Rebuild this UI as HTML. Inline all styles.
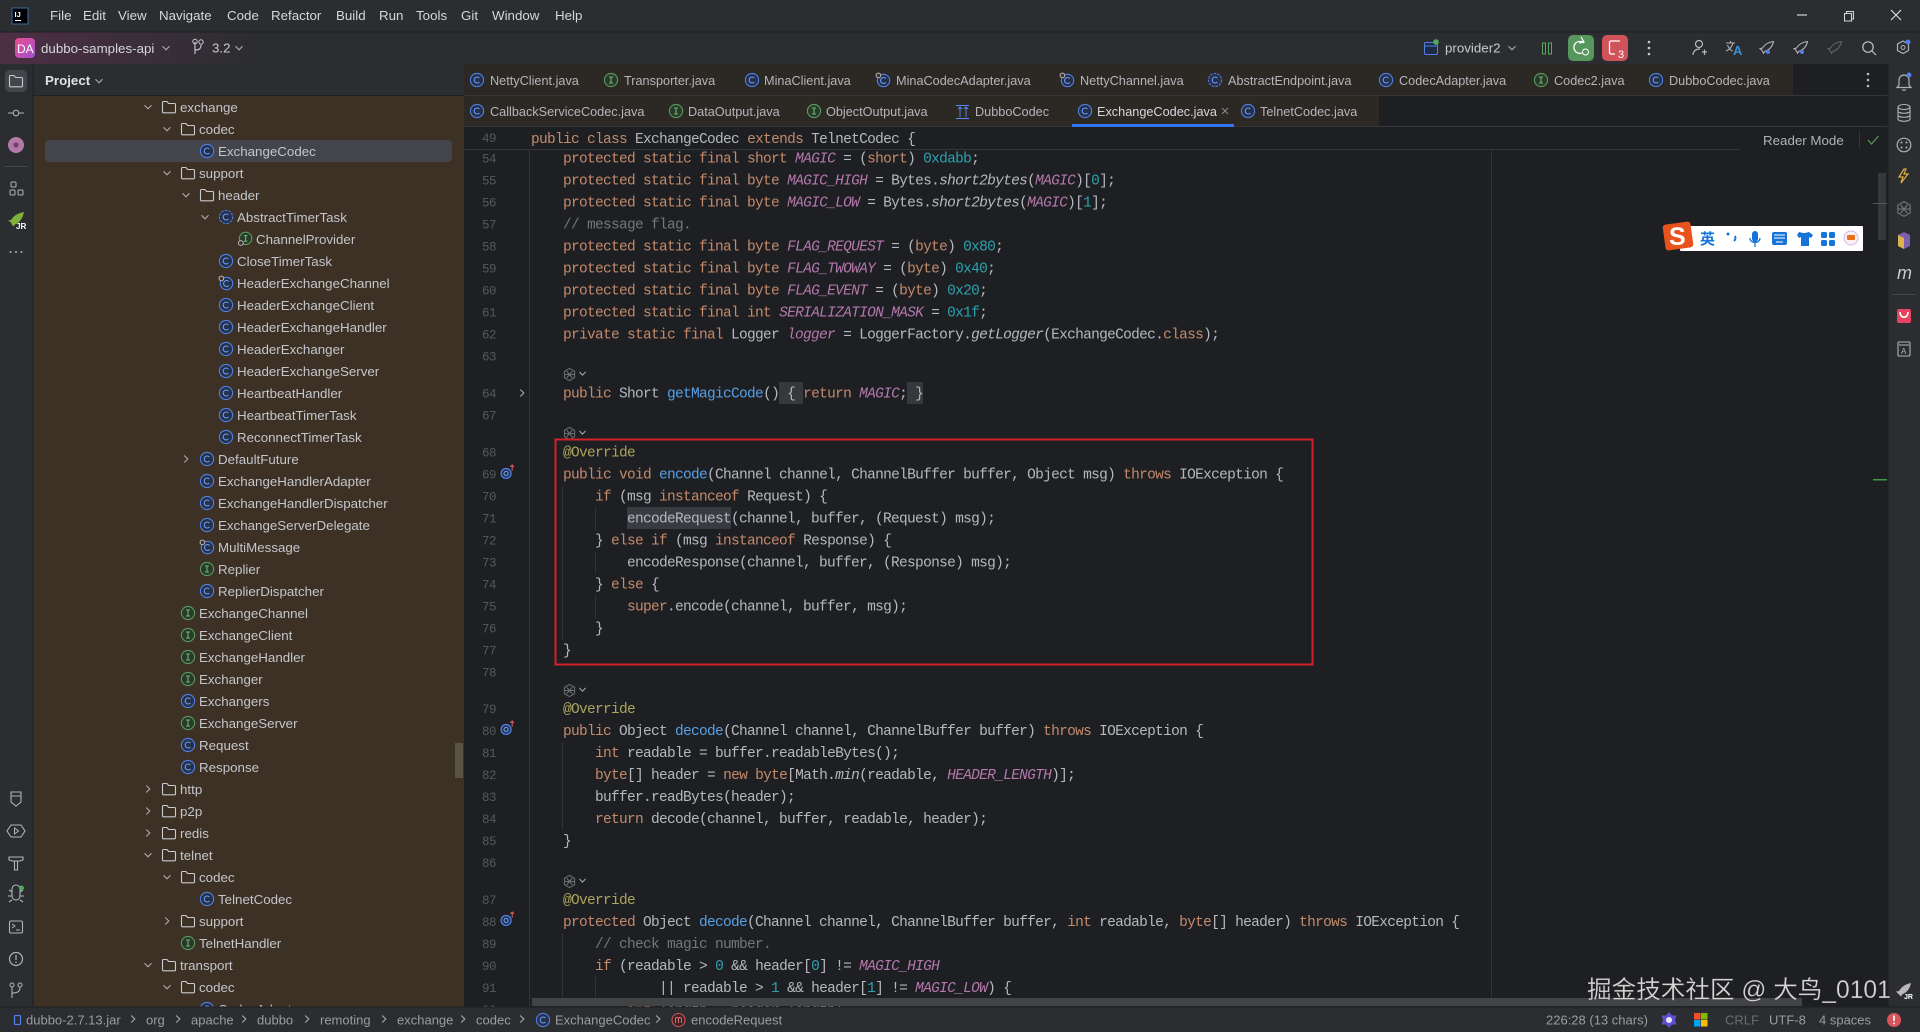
<!DOCTYPE html>
<html><head><meta charset="utf-8"><title>ExchangeCodec.java</title>
<style>
html,body{margin:0;padding:0;background:#1e1f22;width:1920px;height:1032px;overflow:hidden}
svg{display:block;filter:blur(.35px)}
text{white-space:pre;font-family:"Liberation Sans","Noto Sans CJK SC",sans-serif;font-size:13.33px;fill:#bcbec4}
.m{fill:#d5d7dc}
.t{font-size:12.7px;fill:#b4b6bc}
.tr{fill:#c4c6cc}
.c{font-family:"Liberation Mono",monospace;font-size:14.5px;letter-spacing:-.7px;fill:#b6b8be}
.l{font-family:"Liberation Mono",monospace;font-size:12.5px;letter-spacing:-.5px;fill:#55585d}
.k{fill:#c48a6c}.n{fill:#b478ad;font-style:italic}.d{fill:#2aa3ae}.f{fill:#56a0e8}.i{font-style:italic}.g{fill:#73767c}.a{fill:#aaa55c}
.s{font-size:13px;fill:#9a9ca2}
.ln{fill:none;stroke:#b0b2b8;stroke-width:1.2}
</style></head><body>
<svg width="1920" height="1032" viewBox="0 0 1920 1032" xmlns="http://www.w3.org/2000/svg">
<defs>
<linearGradient id="pg" x1="0" x2="1" y1="0" y2="0"><stop offset="0" stop-color="#4d2f45"/><stop offset="1" stop-color="#2b2d30"/></linearGradient>
<linearGradient id="da" x1="0" x2="1" y1="0" y2="1"><stop offset="0" stop-color="#ea4f8f"/><stop offset="1" stop-color="#a24fd0"/></linearGradient>
<symbol id="c" viewBox="0 0 16 16"><circle cx="8" cy="8" r="6.6" fill="#25304a" stroke="#4f80e8" stroke-width="1.1"/><path d="M10.4 6a3 3 0 1 0 0 4" fill="none" stroke="#6f9cf5" stroke-width="1.1"/></symbol>
<symbol id="ca" viewBox="0 0 16 16"><circle cx="8" cy="8" r="6.6" fill="#25304a" stroke="#4f80e8" stroke-width="1.1" stroke-dasharray="2.5 1.2"/><path d="M10.4 6a3 3 0 1 0 0 4" fill="none" stroke="#6f9cf5" stroke-width="1.1"/></symbol>
<symbol id="cp" viewBox="0 0 16 16"><circle cx="8.5" cy="8.5" r="6.2" fill="#25304a" stroke="#4f80e8" stroke-width="1.1"/><path d="M10.8 6.5a3 3 0 1 0 0 4" fill="none" stroke="#6f9cf5" stroke-width="1.1"/><circle cx="3.4" cy="3.4" r="2.3" fill="#3c3124" stroke="#b8bac0"/></symbol>
<symbol id="ii" viewBox="0 0 16 16"><circle cx="8" cy="8" r="6.6" fill="#2a3a2a" stroke="#5a9a5f" stroke-width="1.1"/><path d="M6 5h4M8 5v6M6 11h4" fill="none" stroke="#6fb374" stroke-width="1.1"/></symbol>
<symbol id="ip" viewBox="0 0 16 16"><circle cx="8.6" cy="7.4" r="6.2" fill="#2a3a2a" stroke="#5a9a5f" stroke-width="1.1"/><path d="M6.8 4.6h3.6M8.6 4.6v5.6M6.8 10.2h3.6" fill="none" stroke="#6fb374" stroke-width="1.1"/><circle cx="3.8" cy="12" r="2.4" fill="#3c3124" stroke="#b8bac0"/></symbol>
<symbol id="fo" viewBox="0 0 16 16"><path d="M1.5 3.5a1 1 0 0 1 1-1h3.4l1.7 2h5.9a1 1 0 0 1 1 1v7.3a1 1 0 0 1-1 1h-11a1 1 0 0 1-1-1z" fill="none" stroke="#c9cbd1" stroke-width="1.1"/></symbol>
<symbol id="dn" viewBox="0 0 10 10"><path d="M1.5 3.2 5 6.8 8.5 3.2" fill="none" stroke="#a8aab0" stroke-width="1.1"/></symbol>
<symbol id="rt" viewBox="0 0 10 10"><path d="M3.2 1.5 6.8 5 3.2 8.5" fill="none" stroke="#a8aab0" stroke-width="1.1"/></symbol>
<symbol id="hi" viewBox="0 0 14 16"><path d="M7 1.5 12.5 4.5v7L7 14.5 1.5 11.5v-7zM4 4.5l6 7M10 4.5l-6 7M1.5 8h11" fill="none" stroke="#6e7075" stroke-width="1.1"/></symbol>
<symbol id="ov" viewBox="0 0 16 18"><circle cx="6.5" cy="10" r="5.3" fill="#22304d" stroke="#4f86ee" stroke-width="1.3"/><circle cx="6.5" cy="10" r="2.2" fill="none" stroke="#74a3f7" stroke-width="1.1"/><path d="M13 7V1M11 3l2-2 2 2" fill="none" stroke="#e25b5b" stroke-width="1.1"/></symbol>
<symbol id="rk" viewBox="0 0 16 16"><path d="M14.5 1.5C10 2 6 4 3.5 8l-2.5.7 2 1.5 1.5 3 1.3-1.7C10 10 13.500 6.500 14.500 1.500z" fill="none" stroke="#b0b2b8" stroke-width="1.1"/></symbol>
</defs>

<!-- base chrome -->
<rect width="1920" height="1032" fill="#1e1f22"/>
<rect width="1920" height="64" fill="#2b2d30"/>
<rect y="32" width="260" height="32" fill="url(#pg)"/>
<rect y="31.5" width="1920" height="1" fill="#1f2022"/>
<rect y="64" width="33" height="943" fill="#2b2d30"/>
<rect x="33" y="64" width="431" height="32" fill="#2b2d30"/>
<rect x="33" y="96" width="431" height="911" fill="#3c3124"/>
<rect x="33" y="95" width="431" height="1" fill="#1f2022"/>
<rect x="32.5" y="64" width="1" height="943" fill="#1f2022"/>
<rect x="464" y="64" width="1329" height="32" fill="#2c2823"/>
<rect x="464" y="96" width="915" height="30" fill="#2c2823"/>
<rect x="464" y="95" width="1424" height="1" fill="#35363a"/>
<rect x="464" y="126" width="1424" height="1" fill="#35363a"/>
<rect x="1888" y="64" width="32" height="943" fill="#2b2d30"/>
<rect x="1887.5" y="64" width="1" height="943" fill="#1f2022"/>
<rect x="464" y="149" width="1276" height="1" fill="#35363a"/>
<rect x="529" y="150" width="1" height="857" fill="#313336"/>
<rect x="1491" y="150" width="1" height="857" fill="#313336"/>

<!-- title bar -->
<rect x="12" y="8" width="16" height="16" fill="#000" stroke="#2f6ea8"/>
<text x="14.5" y="17" style="font-size:7.5px;font-weight:bold;fill:#fff">IJ</text>
<rect x="15" y="20" width="6" height="1" fill="#fff"/>
<text class="m" x="50" y="20">File</text>
<text class="m" x="83" y="20">Edit</text>
<text class="m" x="118" y="20">View</text>
<text class="m" x="159" y="20">Navigate</text>
<text class="m" x="227" y="20">Code</text>
<text class="m" x="271" y="20">Refactor</text>
<text class="m" x="336" y="20">Build</text>
<text class="m" x="379" y="20">Run</text>
<text class="m" x="416" y="20">Tools</text>
<text class="m" x="461" y="20">Git</text>
<text class="m" x="492" y="20">Window</text>
<text class="m" x="555" y="20">Help</text>
<path d="M1797 15h10" stroke="#d0d2d8" stroke-width="1.2"/>
<path d="M1844.5 13.5h7v7.5h-7zM1846.5 13.5v-2h7v7.5h-2" fill="none" stroke="#d0d2d8" stroke-width="1.1"/>
<path d="M1891 10l10 10M1901 10l-10 10" stroke="#d8dade" stroke-width="1.2"/>

<!-- toolbar -->
<rect x="15" y="38" width="20" height="20" rx="4" fill="url(#da)"/>
<text x="17" y="53" style="font-size:12px;fill:#fff">DA</text>
<text x="41" y="53" style="fill:#d5d7dc">dubbo-samples-api</text>
<use href="#dn" x="161" y="43" width="10" height="10"/>
<path d="M195 42v12M195 50c4 0 6-1 6-5" fill="none" stroke="#c8cad0" stroke-width="1.1"/><circle cx="195" cy="41.5" r="2.2" fill="none" stroke="#c8cad0"/><circle cx="201" cy="42" r="2.2" fill="none" stroke="#c8cad0"/>
<text x="212" y="52.5" style="fill:#c8cad0">3.2</text>
<use href="#dn" x="234" y="43" width="10" height="10"/>
<rect x="1424.5" y="42.5" width="13" height="12" rx="1.5" fill="#1e2a46" stroke="#4f80e8"/><path d="M1425 46h12" stroke="#4f80e8"/><circle cx="1436" cy="42" r="2.8" fill="#57a85e"/>
<text x="1445" y="52.5" style="fill:#c8cad0">provider2</text>
<use href="#dn" x="1507" y="43" width="10" height="10"/>
<rect x="1542.5" y="43" width="3" height="11" fill="none" stroke="#57a85e"/><rect x="1548.5" y="43" width="3" height="11" fill="none" stroke="#57a85e"/>
<rect x="1568" y="35" width="26" height="26" rx="5" fill="#57965c"/>
<path d="M1584 43a6 6 0 1 0-2 10" fill="none" stroke="#fff" stroke-width="1.3"/><path d="M1581 37l3 5-5 1" fill="none" stroke="#fff" stroke-width="1.2"/><circle cx="1585.5" cy="52" r="3" fill="none" stroke="#fff"/>
<rect x="1602" y="35" width="26" height="26" rx="5" fill="#d0525a"/>
<path d="M1620 41h-9a1.5 1.5 0 0 0-1.5 1.5v10a1.5 1.5 0 0 0 1.5 1.5h4" fill="none" stroke="#fff" stroke-width="1.3"/>
<text x="1618" y="58" style="font-size:11px;fill:#fff">3</text>
<circle cx="1649" cy="42" r="1.3" fill="#c8cad0"/><circle cx="1649" cy="48" r="1.3" fill="#c8cad0"/><circle cx="1649" cy="54" r="1.3" fill="#c8cad0"/>
<circle cx="1699" cy="44" r="3.5" fill="none" stroke="#b8bac0" stroke-width="1.2"/><path d="M1693 55c0-4 3-6 7-6M1702 52h5M1704.5 49.5v5.5" fill="none" stroke="#b8bac0" stroke-width="1.2"/>
<path d="M1726 43h9M1730.5 41v2M1733 43c-1 4-4 7-7 8M1727.5 45c1 3 3 5 5 6" fill="none" stroke="#b0b2b8" stroke-width="1.1"/>
<text x="1733" y="55" style="font-size:13px;font-weight:bold;fill:#3f8fd0">A</text>
<use href="#rk" x="1759" y="40" width="16" height="16"/><circle cx="1768" cy="52" r="2" fill="#4f80e8"/>
<use href="#rk" x="1793" y="40" width="16" height="16"/><circle cx="1802" cy="52" r="2" fill="#4f80e8"/>
<use href="#rk" x="1827" y="40" width="16" height="16" opacity=".4"/>
<circle cx="1868" cy="47" r="5.2" fill="none" stroke="#c0c2c8" stroke-width="1.2"/><path d="M1872 51l4 4" stroke="#c0c2c8" stroke-width="1.2"/>
<path d="M1903 41l5.5 3v6.5l-5.5 3-5.5-3V44z" fill="none" stroke="#b0b2b8" stroke-width="1.2"/><circle cx="1903" cy="47.5" r="2" fill="none" stroke="#b0b2b8"/><circle cx="1908" cy="42" r="2.5" fill="#4f80e8"/>

<!-- left strip -->
<rect x="5" y="70" width="22" height="22" rx="5" fill="#43454a"/>
<use href="#fo" x="8" y="73" width="16" height="16"/>
<path d="M8 113h5M19 113h5" stroke="#b0b2b8" stroke-width="1.1"/><circle cx="16" cy="113" r="2.8" fill="none" stroke="#b0b2b8" stroke-width="1.1"/>
<circle cx="16" cy="145" r="8" fill="#b27aa8"/><circle cx="16" cy="145" r="2.6" fill="#7a3f66"/>
<rect x="4" y="166" width="24" height="1" fill="#43454a"/>
<rect x="11" y="182" width="5" height="5" rx="1" fill="none" stroke="#b0b2b8"/><rect x="10" y="190" width="5" height="5" rx="1" fill="none" stroke="#b0b2b8"/><rect x="18" y="190" width="5" height="5" rx="1" fill="none" stroke="#b0b2b8"/>
<path d="M24 212c-5 1-10 3-13 8l-3 .5 3 2 2 4 2-2c5-2 8-7 9-12.5z" fill="#80b03c"/>
<text x="16" y="229" style="font-size:8px;font-weight:bold;fill:#fff">JR</text>
<circle cx="10.5" cy="252" r="1" fill="#b0b2b8"/><circle cx="16" cy="252" r="1" fill="#b0b2b8"/><circle cx="21.5" cy="252" r="1" fill="#b0b2b8"/>
<path d="M11 792h10v10l-5 4-5-4zM11 796h10" fill="none" stroke="#b0b2b8" stroke-width="1.1"/>
<path d="M11 825h10l4 6-4 6H11l-4-6z" fill="none" stroke="#b0b2b8" stroke-width="1.1"/><path d="M14.5 828l4 3-4 3z" fill="none" stroke="#b0b2b8"/>
<path d="M9 857h14v3l-3 1h-8l-3-1zM14.5 861h3v9h-3z" fill="none" stroke="#b0b2b8" stroke-width="1.1"/>
<path d="M12 889a4 4 0 0 1 8 0v7a4 4 0 0 1-8 0zM9 890l3 2M23 890l-3 2M8 896h4M24 896h-4M9 902l3-2M23 902l-3-2" fill="none" stroke="#b0b2b8" stroke-width="1.1"/><circle cx="21.5" cy="888" r="2.5" fill="#57a85e"/>
<rect x="9.5" y="921" width="13" height="12" rx="1.5" fill="none" stroke="#b0b2b8" stroke-width="1.1"/><path d="M12 924l3 2-3 2M16 930h4" fill="none" stroke="#b0b2b8"/>
<circle cx="16" cy="959" r="6.5" fill="none" stroke="#b0b2b8" stroke-width="1.2"/><path d="M16 955v5M16 961.5v1.5" stroke="#b0b2b8" stroke-width="1.2"/>
<circle cx="12" cy="985" r="2" fill="none" stroke="#b0b2b8"/><circle cx="20" cy="985" r="2" fill="none" stroke="#b0b2b8"/><path d="M12 987v11M12 993c5 0 8-1 8-6" fill="none" stroke="#b0b2b8" stroke-width="1.1"/>

<!-- project panel -->
<text x="45" y="85" style="font-weight:bold;fill:#dfe1e5">Project</text>
<use href="#dn" x="94" y="76" width="10" height="10"/>
<rect x="45" y="140" width="407" height="22" rx="4" fill="#43454a"/>
<rect x="455" y="743" width="8" height="35" fill="#5c5347"/>

<use href="#dn" x="143" y="102" width="10" height="10"/><use href="#fo" x="161" y="99" width="16" height="16"/><text class="tr" x="180" y="112">exchange</text>
<use href="#dn" x="162" y="124" width="10" height="10"/><use href="#fo" x="180" y="121" width="16" height="16"/><text class="tr" x="199" y="134">codec</text>
<use href="#c" x="199" y="143" width="16" height="16"/><text class="tr" x="218" y="156">ExchangeCodec</text>
<use href="#dn" x="162" y="168" width="10" height="10"/><use href="#fo" x="180" y="165" width="16" height="16"/><text class="tr" x="199" y="178">support</text>
<use href="#dn" x="181" y="190" width="10" height="10"/><use href="#fo" x="199" y="187" width="16" height="16"/><text class="tr" x="218" y="200">header</text>
<use href="#dn" x="200" y="212" width="10" height="10"/><use href="#ca" x="218" y="209" width="16" height="16"/><text class="tr" x="237" y="222">AbstractTimerTask</text>
<use href="#ip" x="237" y="231" width="16" height="16"/><text class="tr" x="256" y="244">ChannelProvider</text>
<use href="#c" x="218" y="253" width="16" height="16"/><text class="tr" x="237" y="266">CloseTimerTask</text>
<use href="#cp" x="218" y="275" width="16" height="16"/><text class="tr" x="237" y="288">HeaderExchangeChannel</text>
<use href="#c" x="218" y="297" width="16" height="16"/><text class="tr" x="237" y="310">HeaderExchangeClient</text>
<use href="#c" x="218" y="319" width="16" height="16"/><text class="tr" x="237" y="332">HeaderExchangeHandler</text>
<use href="#c" x="218" y="341" width="16" height="16"/><text class="tr" x="237" y="354">HeaderExchanger</text>
<use href="#c" x="218" y="363" width="16" height="16"/><text class="tr" x="237" y="376">HeaderExchangeServer</text>
<use href="#c" x="218" y="385" width="16" height="16"/><text class="tr" x="237" y="398">HeartbeatHandler</text>
<use href="#c" x="218" y="407" width="16" height="16"/><text class="tr" x="237" y="420">HeartbeatTimerTask</text>
<use href="#c" x="218" y="429" width="16" height="16"/><text class="tr" x="237" y="442">ReconnectTimerTask</text>
<use href="#rt" x="181" y="454" width="10" height="10"/><use href="#c" x="199" y="451" width="16" height="16"/><text class="tr" x="218" y="464">DefaultFuture</text>
<use href="#c" x="199" y="473" width="16" height="16"/><text class="tr" x="218" y="486">ExchangeHandlerAdapter</text>
<use href="#c" x="199" y="495" width="16" height="16"/><text class="tr" x="218" y="508">ExchangeHandlerDispatcher</text>
<use href="#c" x="199" y="517" width="16" height="16"/><text class="tr" x="218" y="530">ExchangeServerDelegate</text>
<use href="#cp" x="199" y="539" width="16" height="16"/><text class="tr" x="218" y="552">MultiMessage</text>
<use href="#ii" x="199" y="561" width="16" height="16"/><text class="tr" x="218" y="574">Replier</text>
<use href="#c" x="199" y="583" width="16" height="16"/><text class="tr" x="218" y="596">ReplierDispatcher</text>
<use href="#ii" x="180" y="605" width="16" height="16"/><text class="tr" x="199" y="618">ExchangeChannel</text>
<use href="#ii" x="180" y="627" width="16" height="16"/><text class="tr" x="199" y="640">ExchangeClient</text>
<use href="#ii" x="180" y="649" width="16" height="16"/><text class="tr" x="199" y="662">ExchangeHandler</text>
<use href="#ii" x="180" y="671" width="16" height="16"/><text class="tr" x="199" y="684">Exchanger</text>
<use href="#c" x="180" y="693" width="16" height="16"/><text class="tr" x="199" y="706">Exchangers</text>
<use href="#ii" x="180" y="715" width="16" height="16"/><text class="tr" x="199" y="728">ExchangeServer</text>
<use href="#c" x="180" y="737" width="16" height="16"/><text class="tr" x="199" y="750">Request</text>
<use href="#c" x="180" y="759" width="16" height="16"/><text class="tr" x="199" y="772">Response</text>
<use href="#rt" x="143" y="784" width="10" height="10"/><use href="#fo" x="161" y="781" width="16" height="16"/><text class="tr" x="180" y="794">http</text>
<use href="#rt" x="143" y="806" width="10" height="10"/><use href="#fo" x="161" y="803" width="16" height="16"/><text class="tr" x="180" y="816">p2p</text>
<use href="#rt" x="143" y="828" width="10" height="10"/><use href="#fo" x="161" y="825" width="16" height="16"/><text class="tr" x="180" y="838">redis</text>
<use href="#dn" x="143" y="850" width="10" height="10"/><use href="#fo" x="161" y="847" width="16" height="16"/><text class="tr" x="180" y="860">telnet</text>
<use href="#dn" x="162" y="872" width="10" height="10"/><use href="#fo" x="180" y="869" width="16" height="16"/><text class="tr" x="199" y="882">codec</text>
<use href="#c" x="199" y="891" width="16" height="16"/><text class="tr" x="218" y="904">TelnetCodec</text>
<use href="#rt" x="162" y="916" width="10" height="10"/><use href="#fo" x="180" y="913" width="16" height="16"/><text class="tr" x="199" y="926">support</text>
<use href="#ii" x="180" y="935" width="16" height="16"/><text class="tr" x="199" y="948">TelnetHandler</text>
<use href="#dn" x="143" y="960" width="10" height="10"/><use href="#fo" x="161" y="957" width="16" height="16"/><text class="tr" x="180" y="970">transport</text>
<use href="#dn" x="162" y="982" width="10" height="10"/><use href="#fo" x="180" y="979" width="16" height="16"/><text class="tr" x="199" y="992">codec</text>
<use href="#c" x="199" y="1001" width="16" height="16"/><text class="tr" x="218" y="1014">CodecAdapter</text>

<!-- tabs -->
<use href="#c" x="469" y="72" width="16" height="16"/><text class="t" x="490" y="85">NettyClient.java</text>
<use href="#ii" x="603" y="72" width="16" height="16"/><text class="t" x="624" y="85">Transporter.java</text>
<use href="#c" x="744" y="72" width="16" height="16"/><text class="t" x="764" y="85">MinaClient.java</text>
<use href="#cp" x="875" y="72" width="16" height="16"/><text class="t" x="896" y="85">MinaCodecAdapter.java</text>
<use href="#cp" x="1059" y="72" width="16" height="16"/><text class="t" x="1080" y="85">NettyChannel.java</text>
<use href="#ca" x="1207" y="72" width="16" height="16"/><text class="t" x="1228" y="85">AbstractEndpoint.java</text>
<use href="#c" x="1378" y="72" width="16" height="16"/><text class="t" x="1399" y="85">CodecAdapter.java</text>
<use href="#ii" x="1533" y="72" width="16" height="16"/><text class="t" x="1554" y="85">Codec2.java</text>
<use href="#c" x="1648" y="72" width="16" height="16"/><text class="t" x="1669" y="85">DubboCodec.java</text>
<circle cx="1868" cy="74" r="1.3" fill="#b8bac0"/><circle cx="1868" cy="80" r="1.3" fill="#b8bac0"/><circle cx="1868" cy="86" r="1.3" fill="#b8bac0"/>
<use href="#c" x="469" y="103" width="16" height="16"/><text class="t" x="490" y="116">CallbackServiceCodec.java</text>
<use href="#ii" x="668" y="103" width="16" height="16"/><text class="t" x="688" y="116">DataOutput.java</text>
<use href="#ii" x="806" y="103" width="16" height="16"/><text class="t" x="826" y="116">ObjectOutput.java</text>
<path d="M956 105.5h13M956 118.5h13M960 117v-10M958 109l2-2 2 2M966 117v-10M964 109l2-2 2 2" fill="none" stroke="#548af7" stroke-width=".9"/><text class="t" x="975" y="116">DubboCodec</text>
<use href="#c" x="1077" y="103" width="16" height="16"/><text class="t" x="1097" y="116" style="fill:#d5d7dc">ExchangeCodec.java</text>
<path d="M1222 108l6 6M1228 108l-6 6" stroke="#8a8c92"/>
<rect x="1072" y="124" width="162" height="3" fill="#3574f0"/>
<use href="#c" x="1240" y="103" width="16" height="16"/><text class="t" x="1260" y="116">TelnetCodec.java</text>

<!-- reader mode -->
<text x="1763" y="145" style="fill:#b0b2b8">Reader Mode</text>
<rect x="1859" y="131" width="1" height="17" fill="#35363a"/>
<path d="M1868 140l3.5 4 7-8" fill="none" stroke="#57965c" stroke-width="1.3"/>

<!-- highlights -->
<rect x="779" y="382" width="24" height="22" fill="#36383c"/>
<rect x="907" y="382" width="16" height="22" fill="#36383c"/>
<rect x="627" y="507" width="104" height="22" fill="#393b40"/>

<!-- indent guides -->
<g fill="#313336">
<rect x="562" y="486" width="1" height="154"/><rect x="562" y="742" width="1" height="88"/><rect x="562" y="933" width="1" height="74"/>
<rect x="595" y="508" width="1" height="22"/><rect x="595" y="552" width="1" height="22"/><rect x="595" y="596" width="1" height="22"/><rect x="595" y="977" width="1" height="30"/>
</g>

<!-- line numbers -->
<text class="l" x="482" y="142">49</text>
<g transform="translate(0,-.6)">
<text class="l" x="482" y="163">54</text><text class="l" x="482" y="185">55</text><text class="l" x="482" y="207">56</text><text class="l" x="482" y="229">57</text><text class="l" x="482" y="251">58</text><text class="l" x="482" y="273">59</text><text class="l" x="482" y="295">60</text><text class="l" x="482" y="317">61</text><text class="l" x="482" y="339">62</text><text class="l" x="482" y="361">63</text>
<text class="l" x="482" y="398">64</text><text class="l" x="482" y="420">67</text>
</g>
<g transform="translate(0,-1.5)">
<text class="l" x="482" y="458">68</text><text class="l" x="482" y="480">69</text><text class="l" x="482" y="502">70</text><text class="l" x="482" y="524">71</text><text class="l" x="482" y="546">72</text><text class="l" x="482" y="568">73</text><text class="l" x="482" y="590">74</text><text class="l" x="482" y="612">75</text><text class="l" x="482" y="634">76</text><text class="l" x="482" y="656">77</text><text class="l" x="482" y="678">78</text>
</g>
<g transform="translate(0,-1)">
<text class="l" x="482" y="714">79</text><text class="l" x="482" y="736">80</text><text class="l" x="482" y="758">81</text><text class="l" x="482" y="780">82</text><text class="l" x="482" y="802">83</text><text class="l" x="482" y="824">84</text><text class="l" x="482" y="846">85</text><text class="l" x="482" y="868">86</text>
<text class="l" x="482" y="905">87</text><text class="l" x="482" y="927">88</text><text class="l" x="482" y="949">89</text><text class="l" x="482" y="971">90</text><text class="l" x="482" y="993">91</text><text class="l" x="482" y="1015">92</text>
</g>

<!-- gutter icons -->
<use href="#rt" x="517" y="388" width="10" height="10"/>
<use href="#ov" x="500" y="464" width="15" height="17"/>
<use href="#ov" x="500" y="720" width="15" height="17"/>
<use href="#ov" x="500" y="911" width="15" height="17"/>
<use href="#hi" x="563" y="367" width="13" height="15"/><use href="#dn" x="578" y="369" width="9" height="9"/>
<use href="#hi" x="563" y="426" width="13" height="15"/><use href="#dn" x="578" y="428" width="9" height="9"/>
<use href="#hi" x="563" y="683" width="13" height="15"/><use href="#dn" x="578" y="685" width="9" height="9"/>
<use href="#hi" x="563" y="874" width="13" height="15"/><use href="#dn" x="578" y="876" width="9" height="9"/>

<!-- code -->
<text class="c" x="531" y="143"><tspan class="k">public class</tspan> ExchangeCodec <tspan class="k">extends</tspan> TelnetCodec {</text>
<g transform="translate(0,-.6)">
<text class="c" x="563" y="163"><tspan class="k">protected static final short</tspan> <tspan class="n">MAGIC</tspan> = (<tspan class="k">short</tspan>) <tspan class="d">0xdabb</tspan>;</text>
<text class="c" x="563" y="185"><tspan class="k">protected static final byte</tspan> <tspan class="n">MAGIC_HIGH</tspan> = Bytes.<tspan class="i">short2bytes</tspan>(<tspan class="n">MAGIC</tspan>)[<tspan class="d">0</tspan>];</text>
<text class="c" x="563" y="207"><tspan class="k">protected static final byte</tspan> <tspan class="n">MAGIC_LOW</tspan> = Bytes.<tspan class="i">short2bytes</tspan>(<tspan class="n">MAGIC</tspan>)[<tspan class="d">1</tspan>];</text>
<text class="c g" x="563" y="229" style="fill:#73767c">// message flag.</text>
<text class="c" x="563" y="251"><tspan class="k">protected static final byte</tspan> <tspan class="n">FLAG_REQUEST</tspan> = (<tspan class="k">byte</tspan>) <tspan class="d">0x80</tspan>;</text>
<text class="c" x="563" y="273"><tspan class="k">protected static final byte</tspan> <tspan class="n">FLAG_TWOWAY</tspan> = (<tspan class="k">byte</tspan>) <tspan class="d">0x40</tspan>;</text>
<text class="c" x="563" y="295"><tspan class="k">protected static final byte</tspan> <tspan class="n">FLAG_EVENT</tspan> = (<tspan class="k">byte</tspan>) <tspan class="d">0x20</tspan>;</text>
<text class="c" x="563" y="317"><tspan class="k">protected static final int</tspan> <tspan class="n">SERIALIZATION_MASK</tspan> = <tspan class="d">0x1f</tspan>;</text>
<text class="c" x="563" y="339"><tspan class="k">private static final</tspan> Logger <tspan class="n">logger</tspan> = LoggerFactory.<tspan class="i">getLogger</tspan>(ExchangeCodec.<tspan class="k">class</tspan>);</text>
<text class="c" x="563" y="398"><tspan class="k">public</tspan> Short <tspan class="f">getMagicCode</tspan>() { <tspan class="k">return</tspan> <tspan class="n">MAGIC</tspan>; }</text>
</g>
<g transform="translate(0,-1.5)">
<text class="c" x="563" y="458"><tspan class="a">@Override</tspan></text>
<text class="c" x="563" y="480"><tspan class="k">public void</tspan> <tspan class="f">encode</tspan>(Channel channel, ChannelBuffer buffer, Object msg) <tspan class="k">throws</tspan> IOException {</text>
<text class="c" x="563" y="502">    <tspan class="k">if</tspan> (msg <tspan class="k">instanceof</tspan> Request) {</text>
<text class="c" x="563" y="524">        encodeRequest(channel, buffer, (Request) msg);</text>
<text class="c" x="563" y="546">    } <tspan class="k">else if</tspan> (msg <tspan class="k">instanceof</tspan> Response) {</text>
<text class="c" x="563" y="568">        encodeResponse(channel, buffer, (Response) msg);</text>
<text class="c" x="563" y="590">    } <tspan class="k">else</tspan> {</text>
<text class="c" x="563" y="612">        <tspan class="k">super</tspan>.encode(channel, buffer, msg);</text>
<text class="c" x="563" y="634">    }</text>
<text class="c" x="563" y="656">}</text>
</g>
<g transform="translate(0,-1)">
<text class="c" x="563" y="714"><tspan class="a">@Override</tspan></text>
<text class="c" x="563" y="736"><tspan class="k">public</tspan> Object <tspan class="f">decode</tspan>(Channel channel, ChannelBuffer buffer) <tspan class="k">throws</tspan> IOException {</text>
<text class="c" x="563" y="758">    <tspan class="k">int</tspan> readable = buffer.readableBytes();</text>
<text class="c" x="563" y="780">    <tspan class="k">byte</tspan>[] header = <tspan class="k">new byte</tspan>[Math.<tspan class="i">min</tspan>(readable, <tspan class="n">HEADER_LENGTH</tspan>)];</text>
<text class="c" x="563" y="802">    buffer.readBytes(header);</text>
<text class="c" x="563" y="824">    <tspan class="k">return</tspan> decode(channel, buffer, readable, header);</text>
<text class="c" x="563" y="846">}</text>
<text class="c" x="563" y="905"><tspan class="a">@Override</tspan></text>
<text class="c" x="563" y="927"><tspan class="k">protected</tspan> Object <tspan class="f">decode</tspan>(Channel channel, ChannelBuffer buffer, <tspan class="k">int</tspan> readable, <tspan class="k">byte</tspan>[] header) <tspan class="k">throws</tspan> IOException {</text>
<text class="c" x="563" y="949" style="fill:#73767c">    // check magic number.</text>
<text class="c" x="563" y="971">    <tspan class="k">if</tspan> (readable &gt; <tspan class="d">0</tspan> &amp;&amp; header[<tspan class="d">0</tspan>] != <tspan class="n">MAGIC_HIGH</tspan></text>
<text class="c" x="563" y="993">            || readable &gt; <tspan class="d">1</tspan> &amp;&amp; header[<tspan class="d">1</tspan>] != <tspan class="n">MAGIC_LOW</tspan>) {</text>
<text class="c" x="563" y="1015">        <tspan class="k">int</tspan> length = header.length;</text>
</g>

<!-- editor scrollbars -->
<rect x="1878" y="173" width="8" height="67" fill="#36373a"/>
<rect x="1873" y="203" width="14" height="1" fill="#55575c"/>
<rect x="1873" y="479" width="14" height="1.5" fill="#3f9a4a"/>
<rect x="532" y="998" width="1270" height="8" fill="#424345"/>

<!-- status bar -->
<rect y="1007" width="1920" height="25" fill="#2b2d30"/>
<rect y="1006.5" width="1920" height="1" fill="#1f2022"/>
<rect x="14.5" y="1015.5" width="6" height="9" rx="1" fill="none" stroke="#4f80e8" stroke-width="1.2"/>
<text class="s" x="26" y="1024.5">dubbo-2.7.13.jar</text><use href="#rt" x="128" y="1014" width="10" height="10"/>
<text class="s" x="146" y="1024.5">org</text><use href="#rt" x="173" y="1014" width="10" height="10"/>
<text class="s" x="191" y="1024.5">apache</text><use href="#rt" x="239" y="1014" width="10" height="10"/>
<text class="s" x="257" y="1024.5">dubbo</text><use href="#rt" x="302" y="1014" width="10" height="10"/>
<text class="s" x="320" y="1024.5">remoting</text><use href="#rt" x="379" y="1014" width="10" height="10"/>
<text class="s" x="397" y="1024.5">exchange</text><use href="#rt" x="458" y="1014" width="10" height="10"/>
<text class="s" x="476" y="1024.5">codec</text><use href="#rt" x="517" y="1014" width="10" height="10"/>
<use href="#c" x="535" y="1012" width="16" height="16"/>
<text class="s" x="555" y="1024.5">ExchangeCodec</text><use href="#rt" x="653" y="1014" width="10" height="10"/>
<circle cx="678.5" cy="1020" r="6.5" fill="#3a2325" stroke="#d0525a" stroke-width="1.1"/><path d="M675.5 1023v-4c0-2 3-2 3 0v4M678.5 1019c0-2 3-2 3 0v4" fill="none" stroke="#e36a72"/>
<text class="s" x="691" y="1024.5">encodeRequest</text>
<text class="s" x="1546" y="1024.5">226:28 (13 chars)</text>
<path d="M1669 1012l3 3.5h4.5l-1.5 4.5 1.5 4.5H1672l-3 3.5-3-3.5h-4.5l1.5-4.5-1.5-4.5h4.5z" fill="#5f4fd0"/><circle cx="1669" cy="1020" r="3" fill="#e9e6ff"/>
<rect x="1694" y="1013" width="6.5" height="6.5" fill="#f25022"/><rect x="1701" y="1013" width="6.5" height="6.5" fill="#7fba00"/><rect x="1694" y="1020" width="6.5" height="6.5" fill="#00a4ef"/><rect x="1701" y="1020" width="6.5" height="6.5" fill="#ffb900"/>
<text x="1725" y="1024.5" style="font-size:13px;fill:#6a6c72">CRLF</text>
<text class="s" x="1769" y="1024.5">UTF-8</text>
<text class="s" x="1819" y="1024.5">4 spaces</text>
<circle cx="1894" cy="1020" r="7" fill="#d9535b"/><path d="M1894 1015.5v5.5M1894 1022.500v1.800" stroke="#fff" stroke-width="1.6"/>

<!-- right strip -->
<path d="M1904 75a5 5 0 0 0-5 5v5l-2 2.5h14l-2-2.5v-5a5 5 0 0 0-5-5zM1902 90h4" fill="none" stroke="#b0b2b8" stroke-width="1.2"/><circle cx="1909" cy="75" r="2.5" fill="#4f80e8"/>
<ellipse cx="1904" cy="107" rx="6" ry="2.5" fill="none" stroke="#b0b2b8" stroke-width="1.1"/><path d="M1898 107v12c0 3 12 3 12 0v-12M1898 111c0 3 12 3 12 0M1898 115c0 3 12 3 12 0" fill="none" stroke="#b0b2b8" stroke-width="1.1"/>
<circle cx="1904" cy="145" r="6.8" fill="none" stroke="#b0b2b8" stroke-width="1.2"/><circle cx="1901.5" cy="142.5" r="1" fill="#b0b2b8"/><circle cx="1906.5" cy="142.5" r="1" fill="#b0b2b8"/><circle cx="1901.5" cy="147.5" r="1" fill="#b0b2b8"/><circle cx="1906.5" cy="147.5" r="1" fill="#b0b2b8"/>
<path d="M1904 169l-5 8h4l-2 6 7-9h-4l2-5z" fill="none" stroke="#e0b03c" stroke-width="1.2"/>
<use href="#hi" x="1896" y="200" width="16" height="18"/>
<path d="M1898 235l6-3 6 3v11l-6 3-6-3z" fill="#7d5fb0"/><path d="M1898 235l6 3v11l-6-3z" fill="#d9b44a"/>
<text x="1897" y="279" style="font-size:18px;font-style:italic;fill:#c8cad0">m</text>
<rect x="1892" y="294" width="24" height="1" fill="#43454a"/>
<rect x="1897" y="309" width="14" height="14" rx="2" fill="#e8435f"/><path d="M1900 312c0 7 8 7 8 0" fill="none" stroke="#fff" stroke-width="1.6"/>
<rect x="1898" y="342" width="12" height="14" rx="1" fill="none" stroke="#b0b2b8" stroke-width="1.1"/><path d="M1899 345h10" stroke="#b0b2b8"/><text x="1901" y="354" style="font-size:8px;fill:#b0b2b8">A</text>

<!-- red box -->
<rect x="555.5" y="439.5" width="757" height="225" fill="none" stroke="#d4202c" stroke-width="2"/>

<!-- sogou -->
<rect x="1680" y="226" width="183" height="25" rx="1" fill="#fff"/>
<rect x="1664" y="223" width="28" height="26" rx="3" fill="#e8531d" transform="rotate(-8 1678 236)"/>
<text x="1669" y="245" style="font-size:25px;font-weight:bold;fill:#fff">S</text>
<text x="1700" y="244" style="font-size:15px;font-weight:bold;fill:#1673d8">英</text>
<circle cx="1728" cy="234" r="1.5" fill="#1673d8"/><path d="M1735 236c1 2 0 4-1 5" fill="none" stroke="#1673d8" stroke-width="2"/>
<rect x="1752" y="231" width="6" height="11" rx="3" fill="#1673d8"/><path d="M1750 238c0 6 10 6 10 0M1755 243v4" fill="none" stroke="#1673d8" stroke-width="1.3"/>
<rect x="1772" y="232" width="15" height="13" rx="2" fill="#1673d8"/><path d="M1774 235h11M1774 238h11M1776 242h7" stroke="#fff"/>
<path d="M1799 232l4 1h2l4-1 4 3-2 3-2-1v9h-8v-9l-2 1-2-3z" fill="#1673d8"/>
<rect x="1821" y="232" width="6" height="6" rx="1.5" fill="#1673d8"/><rect x="1829" y="232" width="6" height="6" rx="1.5" fill="#1673d8"/><rect x="1821" y="240" width="6" height="6" rx="1.5" fill="#1673d8"/><rect x="1829" y="240" width="6" height="6" rx="1.5" fill="#1673d8"/>
<circle cx="1851" cy="238" r="7" fill="#fbeef0" stroke="#d4b8e8"/><rect x="1847" y="235" width="8" height="5" rx="1" fill="#e8701d"/>

<!-- watermark -->
<text x="1587" y="998" style="font-size:24.6px;fill:#d6d6d6;stroke:#3a3a3a;stroke-width:.3px;font-family:'Liberation Sans','Noto Sans CJK SC',sans-serif">掘金技术社区 @ 大鸟_0101</text>
<path d="M1911 983c-5 1-9 3-12 8l-3 .5 2 2 3 3 1-2c5-2 8-6 9-11.5z" fill="#b8b8b8"/>
<text x="1904" y="999" style="font-size:7px;font-weight:bold;fill:#fff">JR</text>
</svg>
</body></html>
